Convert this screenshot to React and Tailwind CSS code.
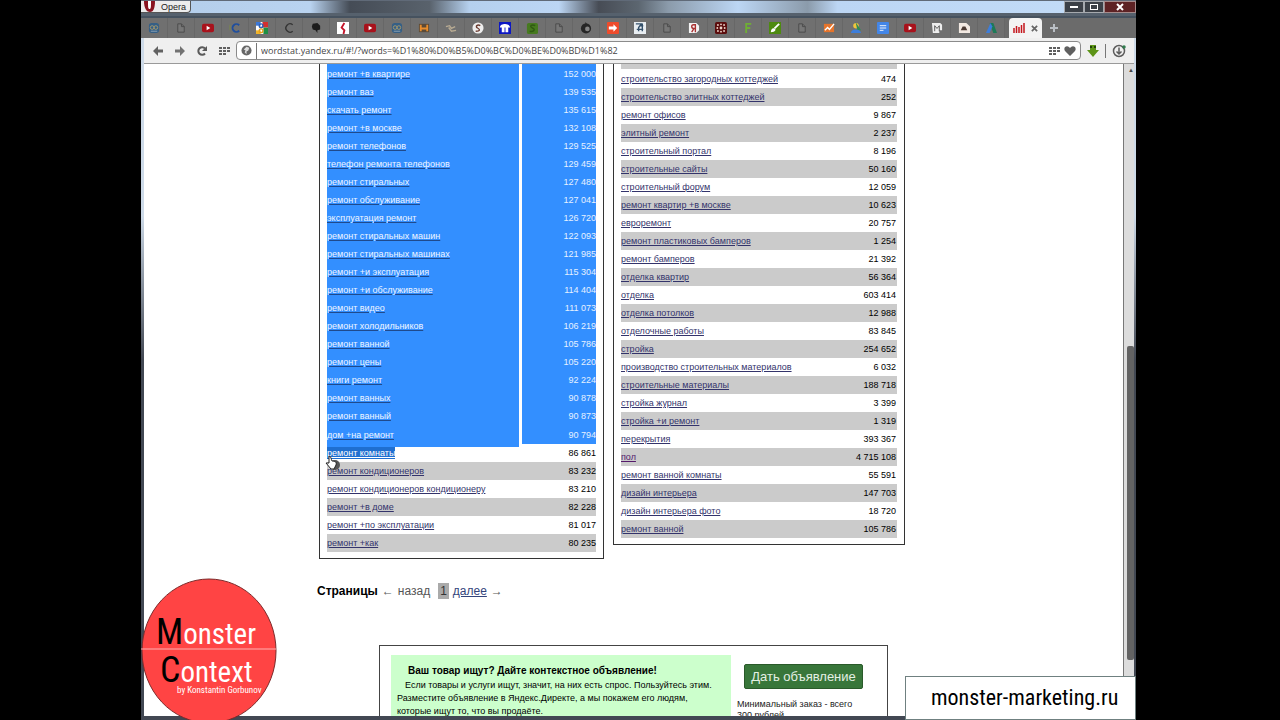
import React from "react";

const leftRows = [
  ["ремонт +в квартире", "152 000"],
  ["ремонт ваз", "139 535"],
  ["скачать ремонт", "135 615"],
  ["ремонт +в москве", "132 108"],
  ["ремонт телефонов", "129 525"],
  ["телефон ремонта телефонов", "129 459"],
  ["ремонт стиральных", "127 480"],
  ["ремонт обслуживание", "127 041"],
  ["эксплуатация ремонт", "126 720"],
  ["ремонт стиральных машин", "122 093"],
  ["ремонт стиральных машинах", "121 985"],
  ["ремонт +и эксплуатация", "115 304"],
  ["ремонт +и обслуживание", "114 404"],
  ["ремонт видео", "111 073"],
  ["ремонт холодильников", "106 219"],
  ["ремонт ванной", "105 786"],
  ["ремонт цены", "105 220"],
  ["книги ремонт", "92 224"],
  ["ремонт ванных", "90 878"],
  ["ремонт ванный", "90 873"],
  ["дом +на ремонт", "90 794"],
  ["ремонт комнаты", "86 861"],
  ["ремонт кондиционеров", "83 232"],
  ["ремонт кондиционеров кондиционеру", "83 210"],
  ["ремонт +в доме", "82 228"],
  ["ремонт +по эксплуатации", "81 017"],
  ["ремонт +как", "80 235"],
];

const rightRows = [
  ["строительство загородных коттеджей", "474"],
  ["строительство элитных коттеджей", "252"],
  ["ремонт офисов", "9 867"],
  ["элитный ремонт", "2 237"],
  ["строительный портал", "8 196"],
  ["строительные сайты", "50 160"],
  ["строительный форум", "12 059"],
  ["ремонт квартир +в москве", "10 623"],
  ["евроремонт", "20 757"],
  ["ремонт пластиковых бамперов", "1 254"],
  ["ремонт бамперов", "21 392"],
  ["отделка квартир", "56 364"],
  ["отделка", "603 414"],
  ["отделка потолков", "12 988"],
  ["отделочные работы", "83 845"],
  ["стройка", "254 652"],
  ["производство строительных материалов", "6 032"],
  ["строительные материалы", "188 718"],
  ["стройка журнал", "3 399"],
  ["стройка +и ремонт", "1 319"],
  ["перекрытия", "393 367"],
  ["пол", "4 715 108"],
  ["ремонт ванной комнаты", "55 591"],
  ["дизайн интерьера", "147 703"],
  ["дизайн интерьера фото", "18 720"],
  ["ремонт ванной", "105 786"],
];

// last row that is fully inside the text selection
const SELECTED = 20;

const page = (
  <g>
    <path d="M3 2h4l3 3v6H3z" fill="#777" stroke="#4a4a4a" />
    <path d="M7 2v3h3" fill="none" stroke="#4a4a4a" />
  </g>
);
const video = (
  <g>
    <rect x="0" y="2" width="13" height="9" rx="2" fill="#a8121c" />
    <path d="M5 4l4 2.5L5 9z" fill="#fff" />
  </g>
);
const globe = (
  <g>
    <rect x="1" y="1" width="11" height="11" rx="3" fill="#355f86" />
    <circle cx="4.5" cy="6" r="2" fill="none" stroke="#a79a6c" />
    <circle cx="8.5" cy="6" r="2" fill="none" stroke="#a79a6c" />
    <path d="M3 10h7" stroke="#8ea3b5" />
  </g>
);

const favicons = [
  globe,
  page,
  video,
  <g>
    <path d="M11 3.5A4.2 4.2 0 1 0 11 9.5" fill="none" stroke="#1f4e9e" strokeWidth="2" />
    <path d="M1 3v6" stroke="#7c8a4a" />
  </g>,
  <g>
    <rect width="13" height="13" fill="#fff" />
    <path d="M7 0h6v6H7z" fill="#d3302f" />
    <path d="M8 6h5v7H8z" fill="#1d8f45" />
    <path d="M0 0h5v4H0z" fill="#3b78d8" />
    <path d="M0 9h5v4H0z" fill="#f1b52a" />
    <circle cx="5.5" cy="4" r="2" fill="none" stroke="#2f62b8" strokeWidth="1.5" />
    <circle cx="5.5" cy="9.5" r="2" fill="none" stroke="#e6a11c" strokeWidth="1.5" />
  </g>,
  <path d="M10.5 3A4.5 4.5 0 1 0 10.5 10" fill="none" stroke="#333" strokeWidth="1.5" />,
  <path d="M3 2l5-1 3 3v4l-3 1v3L6 9 3 8 2 5z" fill="#1c1c1c" />,
  <g>
    <rect width="13" height="13" fill="#fff" />
    <path d="M8 1L5 6l3 3-1 4" fill="none" stroke="#c4152a" strokeWidth="2" />
  </g>,
  video,
  globe,
  <g>
    <rect x="1" y="2" width="11" height="9" fill="#5a4a38" />
    <path d="M3 3v7M10 3v7M3 7h7" stroke="#e98d2c" strokeWidth="2" />
  </g>,
  <path d="M1 5l4-1 2 3 4-2M4 6l3 4 5-1" fill="none" stroke="#b8ab93" strokeWidth="1.5" />,
  <g>
    <circle cx="6.5" cy="6.5" r="6" fill="#eee" />
    <path d="M9 4C6 2 3 5 6 6.5S9 10 4 10" fill="none" stroke="#6b3b30" strokeWidth="1.5" />
  </g>,
  <g>
    <rect width="13" height="13" fill="#0c17c4" />
    <path d="M1 6c0-5 11-5 11 0zM3 6h3v5H3zM7 6h3v5H7z" fill="#fff" />
  </g>,
  <g>
    <rect x="1" y="1" width="12" height="12" rx="2" fill="#467a1f" />
    <path d="M10 4C6 2 3 5 7 6.5S8 11 4 10" fill="none" stroke="#2f5a12" strokeWidth="1.5" />
  </g>,
  page,
  <g>
    <circle cx="6.5" cy="7" r="5.5" fill="#262626" />
    <path d="M6 0l3 4-4 2z" fill="#262626" />
    <circle cx="8" cy="7.5" r="2.5" fill="#858585" />
  </g>,
  <g>
    <rect width="13" height="13" rx="1" fill="#ee4b2b" />
    <path d="M2 5h5V2.5l4 4-4 4V8H2z" fill="#fff" />
  </g>,
  <g>
    <rect width="13" height="13" fill="#e8edf1" />
    <path d="M2 2h6L5 6v4M9 2v8M3 8h7M6 4h4" fill="none" stroke="#34516c" strokeWidth="1.5" />
  </g>,
  page,
  <g>
    <path d="M1 1h8l3 3v5l-3 3H1z" fill="#f4f4f4" />
    <path d="M8 11V3H6a2 2 0 0 0 0 4h2M6.5 7L4 11" fill="none" stroke="#a33" strokeWidth="1.5" />
  </g>,
  <g>
    <rect width="13" height="13" rx="2" fill="#5b0d0d" />
    <g fill="#ecd3c8">
      <circle cx="6.5" cy="6.5" r="1.5" />
      <circle cx="6.5" cy="2.5" r="1" />
      <circle cx="6.5" cy="10.5" r="1" />
      <circle cx="2.5" cy="6.5" r="1" />
      <circle cx="10.5" cy="6.5" r="1" />
      <circle cx="3.2" cy="3.2" r="1" />
      <circle cx="9.8" cy="3.2" r="1" />
      <circle cx="3.2" cy="9.8" r="1" />
      <circle cx="9.8" cy="9.8" r="1" />
    </g>
  </g>,
  <path d="M4.5 12V2H10M4.5 6.5H9" fill="none" stroke="#6fae35" strokeWidth="2" />,
  <g>
    <rect width="13" height="13" fill="#4e8a10" />
    <path d="M11 2L6 7" stroke="#fff" strokeWidth="2" />
    <path d="M2 11c0-3 2-5 4-4s1 4-4 4z" fill="#fff" />
  </g>,
  page,
  <g>
    <rect x="1" y="2" width="11" height="9" fill="#e6742b" />
    <path d="M2 9l3-3 2 2 5-6" fill="none" stroke="#fff" strokeWidth="1.5" />
  </g>,
  <g>
    <circle cx="6.5" cy="4" r="3" fill="#f0c43c" />
    <path d="M6 0l6 9H8z" fill="#2d8b57" />
    <path d="M1 12c0-5 10-5 11 0z" fill="#3d7edb" />
  </g>,
  <g>
    <rect width="13" height="13" rx="1" fill="#4386e8" />
    <path d="M3 4h7M3 6.5h7M3 9h4" stroke="#fff" />
  </g>,
  video,
  <g>
    <path d="M1 1h9l2 2v6H9v3H2z" fill="#eee" />
    <path d="M4 10V4l2.5 3L9 4v6" fill="none" stroke="#555" />
  </g>,
  <g>
    <path d="M1 1h8l4 4v7H1z" fill="#f2e9e2" />
    <path d="M3 9l2-4h3l2 4z" fill="#4b3a33" />
  </g>,
  <g>
    <path d="M5 1h4l4 11H9z" fill="#1c7a58" />
    <path d="M6 1l2 4-3 7H1z" fill="#3d7edb" />
  </g>,
];

function Grid({ className }) {
  return (
    <svg className={className} viewBox="0 0 11 8" fill="#5f5f5f" aria-hidden="true">
      <path d="M0 0h3v2H0zM4 0h3v2H4zM8 0h3v2H8zM0 3h3v2H0zM4 3h3v2H4zM8 3h3v2H8zM0 6h3v2H0zM4 6h3v2H4z" />
    </svg>
  );
}

function TitleBar() {
  return (
    <div className="flex h-4 items-start justify-between border-t border-b-3 border-t-[#606a78] border-b-[#56616d] bg-[linear-gradient(90deg,#b3cdea_0%,#b9d3f0_17%,#454c56_21%,#59626c_29%,#b5d0ee_33%,#bcd6f4_42%,#474c55_46%,#5c6670_50%,#8b9bab_53%,#bcd6f4_60%,#8b9bab_67%,#bcd6f4_70%,#c3dcf8_100%)]">
      <button className="flex h-3 items-center gap-1 rounded-br-sm border-r border-b border-[#555] bg-[#ececec] pr-1 text-[9px] leading-3 text-[#222]">
        <svg className="h-3 w-4" viewBox="0 0 16 12" aria-hidden="true">
          <path d="M3 0h11c0 8-2 11-5 11S3 8 3 0z" fill="#8a1420" />
          <path d="M7 0h3c0 6 0 8-1.500 8S7 6 7 0z" fill="#fff" />
        </svg>
        Opera
      </button>
      <div className="flex h-3 text-white">
        <button aria-label="Свернуть" className="flex w-5 items-center justify-center border border-[#a5a9ae] bg-[#3b4047]">
          <span className="h-0.5 w-2 bg-white" />
        </button>
        <button aria-label="Развернуть" className="flex w-5 items-center justify-center border border-[#a5a9ae] bg-[#3b4047]">
          <span className="h-1.5 w-2 border border-white" />
        </button>
        <button aria-label="Закрыть" className="flex w-8 items-center justify-center border border-[#a58a8a] bg-[#5d2224]">
          <svg className="h-2 w-2" viewBox="0 0 8 8" stroke="#fff" strokeWidth="2" aria-hidden="true">
            <path d="M1 1l6 6M7 1L1 7" />
          </svg>
        </button>
      </div>
    </div>
  );
}

function TabStrip() {
  return (
    <div className="flex h-[22px] items-end border-t-2 border-[#46525f] bg-[#6b6b6b]">
      {favicons.map((icon, i) => (
        <button key={i} aria-label={`Вкладка ${i + 1}`} className="flex h-5 w-[27px] shrink-0 items-center justify-center border-r border-[#676767] bg-[#707070]">
          <svg className="size-[12px]" viewBox="0 0 13 13">{icon}</svg>
        </button>
      ))}
      <button aria-label="Вордстат" className="ml-1 flex h-5 w-[33px] shrink-0 items-center justify-center gap-1.5 rounded-t bg-[#f3f3f3]">
        <svg className="h-2.5 w-3" viewBox="0 0 12 10" stroke="#c4161c" strokeWidth="1.5" aria-hidden="true">
          <path d="M1 10V5M3.500 10V3M6 10V4M8.500 10V2M11 10V0" />
        </svg>
        <svg className="size-[7px]" viewBox="0 0 8 8" stroke="#666" strokeWidth="2" aria-hidden="true">
          <path d="M1 1l6 6M7 1L1 7" />
        </svg>
      </button>
      <button aria-label="Новая вкладка" className="flex h-5 w-6 items-center justify-center">
        <svg className="size-2" viewBox="0 0 8 8" stroke="#b9bec4" strokeWidth="2" aria-hidden="true">
          <path d="M4 0v8M0 4h8" />
        </svg>
      </button>
    </div>
  );
}

function Toolbar() {
  return (
    <div className="flex h-[26px] items-center border-b border-[#9a9a9a] bg-[#efefef] pr-2 pl-[9px]">
      <div className="flex w-[83px] items-center gap-3">
        <button aria-label="Назад">
          <svg className="size-2.5" viewBox="0 0 10 10" fill="#626262"><path d="M5 0v3.500h5v3H5V10L0 5z" /></svg>
        </button>
        <button aria-label="Вперёд">
          <svg className="size-2.5" viewBox="0 0 10 10" fill="#727272"><path d="M5 0v3.500H0v3h5V10l5-5z" /></svg>
        </button>
        <button aria-label="Обновить">
          <svg className="size-2.5" viewBox="0 0 10 10">
            <path d="M8 7.500A3.800 3.800 0 1 1 8 2.500" fill="none" stroke="#5a5a5a" strokeWidth="2" />
            <path d="M10 0v5H5z" fill="#5a5a5a" />
          </svg>
        </button>
        <button aria-label="Экспресс-панель">
          <Grid className="h-2 w-[11px]" />
        </button>
      </div>
      <div className="flex h-[19px] flex-1 items-center gap-1 rounded-sm border border-[#8b8b8b] bg-white px-1">
        <svg className="size-[11px] shrink-0" viewBox="0 0 12 12" aria-hidden="true">
          <circle cx="6" cy="6" r="5.500" fill="#666" />
          <path d="M6 2l3 1-1 3-2 1v3L4 8l1-2-2-1z" fill="#ddd" />
        </svg>
        <input
          aria-label="Адрес"
          defaultValue="wordstat.yandex.ru/#!/?words=%D1%80%D0%B5%D0%BC%D0%BE%D0%BD%D1%82"
          className="h-4 min-w-0 flex-1 border-l border-[#777] pl-1 font-['Open_Sans',sans-serif] text-[9px] text-[#444] outline-none"
        />
        <Grid className="h-2 w-[11px]" />
        <svg className="h-2.5 w-3" viewBox="0 0 12 10" fill="#606060" aria-hidden="true">
          <path d="M6 10L1 5C-1 2 2-1 5 1l1 1 1-1c3-2 6 1 4 4z" />
        </svg>
      </div>
      <div className="flex items-center gap-1.5 pl-1.5">
        <button aria-label="Загрузить">
          <svg className="size-3" viewBox="0 0 12 12">
            <path d="M3 0h6v5h3l-6 7-6-7h3z" fill="#5d9417" />
            <path d="M3 1h2v2H3zM7 1h2v2H7z" fill="#23430a" />
          </svg>
        </button>
        <span className="h-3.5 w-px bg-[#777]" />
        <button aria-label="Загрузки">
          <svg className="size-3.5" viewBox="0 0 14 14" fill="none" stroke="#5c5c5c" strokeWidth="1.5">
            <circle cx="7" cy="7" r="5.500" />
            <path d="M7 3.500v6M4.500 7.500L7 10l2.500-2.500" />
            <circle cx="12" cy="3" r="1" stroke="#2d7a4b" />
          </svg>
        </button>
      </div>
    </div>
  );
}

function LeftTable() {
  return (
    <table className="w-full border-collapse">
      <tbody>
        {leftRows.map(([name, count], i) => {
          const selected = i <= SELECTED;
          const striped = !selected && i % 2 === 0;
          return (
            <tr key={name} className={`${i === SELECTED || i === 0 ? "h-[19px]" : "h-[18px]"} ${striped ? "bg-[#cbcbcb]" : ""}`}>
              <td className={`p-0 ${selected ? "bg-[#338fff]" : ""} ${i === SELECTED ? "shadow-[0_3px_0_#338fff]" : ""}`}>
                <a
                  href="#"
                  className={`relative block w-fit underline ${selected ? "text-[#f0f6ff] decoration-[#1f4a8c]" : i === SELECTED + 1 ? "bg-[#1f6fd0] text-white" : "text-[#33336b]"}`}
                >
                  {name}
                </a>
              </td>
              <td className="w-[3px] p-0" />
              <td className={`w-[74px] p-0 text-right ${selected ? "bg-[#338fff] text-[#e6f1ff]" : "text-black"}`}>{count}</td>
            </tr>
          );
        })}
      </tbody>
    </table>
  );
}

function RightTable() {
  return (
    <table className="w-full border-collapse">
      <tbody>
        {rightRows.map(([name, count], i) => (
          <tr key={i} className={`h-[18px] ${i % 2 ? "bg-[#cbcbcb]" : ""}`}>
            <td className="p-0">
              <a href="#" className={`underline ${name === "пол" ? "text-[#551a6b]" : "text-[#33336b]"}`}>{name}</a>
            </td>
            <td className="p-0 pr-px text-right text-black">{count}</td>
          </tr>
        ))}
      </tbody>
    </table>
  );
}

function Advert() {
  return (
    <div className="mt-[46px] ml-[235px] flex w-[509px] items-start border border-b-0 border-[#444] px-[11px] pt-[9px]">
      <div className="w-[340px] bg-[#ccffcc] pt-2 pr-3 pb-4 pl-1.5 text-[9px] leading-[13px] text-black">
        <h2 className="pl-[11px] text-[10px] leading-4 font-bold">Ваш товар ищут? Дайте контекстное объявление!</h2>
        <p className="indent-2">
          Если товары и услуги ищут, значит, на них есть спрос. Пользуйтесь этим. Разместите объявление в Яндекс.Директе, а мы покажем его людям, которые ищут то, что вы продаёте.
        </p>
      </div>
      <div className="flex-1 pt-[9px] pl-1.5">
        <button className="ml-[7px] h-[25px] w-[119px] rounded-xs border border-[#2a5a2a] bg-[#38763a] text-[13px] text-[#e4f0e4]">Дать объявление</button>
        <p className="mt-2.5 pr-4 text-[9px] leading-[11px] text-[#222]">Минимальный заказ - всего 300 рублей</p>
      </div>
    </div>
  );
}

function Logo() {
  return (
    <svg className="absolute bottom-0 left-0 h-[142px] w-[137px]" viewBox="0 0 137 142" fontFamily="'Roboto Condensed', 'Open Sans Condensed', sans-serif" fill="#fff">
      <ellipse cx="68" cy="73" rx="67" ry="72" fill="#ff4444" stroke="#7c2a2a" />
      <path d="M0 71h135" stroke="#ffb0b0" />
      <text x="15" y="66" fontSize="29"><tspan fill="#000" fontSize="36">M</tspan>onster</text>
      <text x="19" y="104" fontSize="29"><tspan fill="#000" fontSize="36">C</tspan>ontext</text>
      <text x="36" y="115" fontSize="9">by Konstantin Gorbunov</text>
    </svg>
  );
}

export default function App() {
  return (
    <div className="h-screen overflow-hidden bg-black px-[141px] font-['Liberation_Sans',Arial,sans-serif]">
      <div className="relative mr-[3px] flex h-full flex-col bg-linear-to-b from-[#cddae8] from-30% to-[#424853] to-50%">
        <TitleBar />
        <TabStrip />
        <div className="mr-[2px] ml-[3px] flex min-h-0 flex-1 flex-col">
          <Toolbar />
          <div className="flex min-h-0 flex-1 bg-white">
            <main className="min-w-0 flex-1 overflow-hidden">
              <div className="flex items-start gap-[9px] pl-[175px] text-[9px] leading-[12px]">
                <div className="w-[285px] border border-t-0 border-[#333] px-[7px] pb-[6px]">
                  <LeftTable />
                </div>
                <div className="w-[292px] border border-t-0 border-[#333] px-[7px] pb-[6px]">
                  <div className="mb-px h-[5px] bg-[#cbcbcb]" />
                  <RightTable />
                </div>
              </div>
              <nav className="flex items-center pt-6 pl-[173px] text-[12px] leading-4 text-[#555]">
                <b className="text-black">Страницы</b>
                <span className="ml-1">←</span>
                <span className="ml-1">назад</span>
                <span className="mr-1 ml-2 bg-[#aaa] px-0.5 text-[#333]">1</span>
                <a href="#" className="text-[#33447b] underline">далее</a>
                <span className="ml-1">→</span>
              </nav>
              <Advert />
            </main>
            <div className="flex w-[11px] flex-col items-end border-l border-[#777] bg-[#dcdcdc]">
              <span className="py-0.5 text-[6px] leading-2 text-[#444]">▲</span>
              <div className="mt-[270px] mb-14 w-[7px] flex-1 rounded-xs bg-[#636363]" />
            </div>
          </div>
          <div className="h-1 shrink-0 bg-[#424853]" />
        </div>
        <Logo />
        <svg className="absolute top-[455px] left-[184px] h-4 w-4" viewBox="0 0 16 16" aria-hidden="true">
          <circle cx="10" cy="10" r="5" fill="#555" />
          <path d="M4 1c2 0 2 3 3 5 3 0 5 1 4 4l-2 4H6L1 8l3 0z" fill="#fff" stroke="#222" />
        </svg>
        <div className="absolute right-0 bottom-0 w-[231px] border border-[#6f8080] bg-white py-2 pl-[25px] font-['Roboto_Condensed','Open_Sans_Condensed',sans-serif] text-[22px] leading-[26px] text-black">
          monster-marketing.ru
        </div>
      </div>
    </div>
  );
}
